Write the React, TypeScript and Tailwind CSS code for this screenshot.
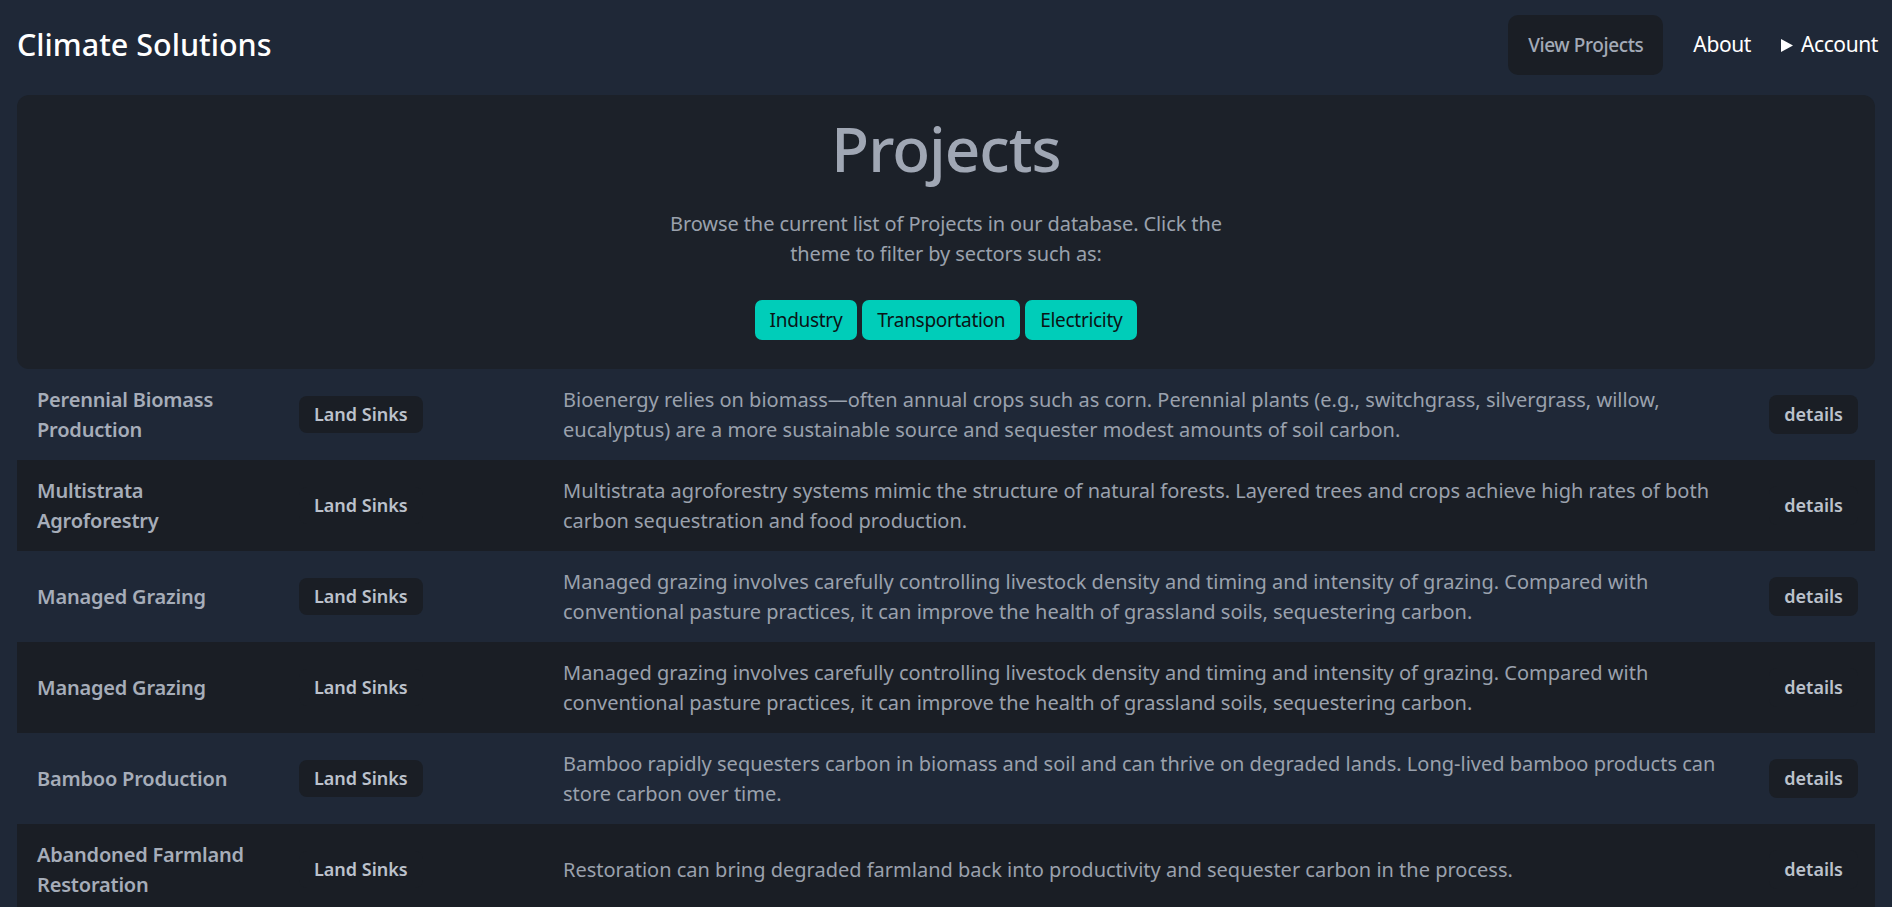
import React from "react";

type Project = {
	title: string;
	theme: string;
	description: string;
};

const projects: Project[] = [
	{
		title: "Perennial Biomass Production",
		theme: "Land Sinks",
		description:
			"Bioenergy relies on biomass—often annual crops such as corn. Perennial plants (e.g., switchgrass, silvergrass, willow, eucalyptus) are a more sustainable source and sequester modest amounts of soil carbon.",
	},
	{
		title: "Multistrata Agroforestry",
		theme: "Land Sinks",
		description:
			"Multistrata agroforestry systems mimic the structure of natural forests. Layered trees and crops achieve high rates of both carbon sequestration and food production.",
	},
	{
		title: "Managed Grazing",
		theme: "Land Sinks",
		description:
			"Managed grazing involves carefully controlling livestock density and timing and intensity of grazing. Compared with conventional pasture practices, it can improve the health of grassland soils, sequestering carbon.",
	},
	{
		title: "Managed Grazing",
		theme: "Land Sinks",
		description:
			"Managed grazing involves carefully controlling livestock density and timing and intensity of grazing. Compared with conventional pasture practices, it can improve the health of grassland soils, sequestering carbon.",
	},
	{
		title: "Bamboo Production",
		theme: "Land Sinks",
		description:
			"Bamboo rapidly sequesters carbon in biomass and soil and can thrive on degraded lands. Long-lived bamboo products can store carbon over time.",
	},
	{
		title: "Abandoned Farmland Restoration",
		theme: "Land Sinks",
		description:
			"Restoration can bring degraded farmland back into productivity and sequester carbon in the process.",
	},
];

const sectors = ["Industry", "Transportation", "Electricity"];

const font = "font-['Noto_Sans','Open_Sans',sans-serif]";

function Header() {
	return (
		<header className="flex h-[90px] items-center justify-between">
			<h1 className="text-[30.5px] font-medium text-white">Climate Solutions</h1>
			<nav className="mr-[-3px] flex items-center gap-[30px]">
				<button className="h-[60px] rounded-[10px] bg-[#1a1e25] px-[20px] text-[19px] font-medium tracking-[-0.4px] text-[#a3aab7]">
					View Projects
				</button>
				<a className="text-[21px] tracking-[-0.4px] text-white">About</a>
				<div className="flex items-center gap-[8px] text-[21px] tracking-[-0.4px] text-white">
					<svg width="12" height="13" viewBox="0 0 12 13">
						<polygon points="0,0 12,6.5 0,13" fill="#ffffff" />
					</svg>
					<span>Account</span>
				</div>
			</nav>
		</header>
	);
}

function Hero() {
	return (
		<section className="mt-[5px] flex flex-col items-center rounded-[12px] bg-[#1c2129] pb-[29px] pt-[22px]">
			<h2 className="text-[62px] font-medium leading-none tracking-[-1px] text-[#a0a7b4]">
				Projects
			</h2>
			<p className="mt-[30px] max-w-[580px] text-center text-[20px] leading-[30px] tracking-[-0.1px] text-[#9aa1ad]">
				Browse the current list of Projects in our database. Click the theme
				to filter by sectors such as:
			</p>
			<div className="mt-[31px] flex gap-[5px]">
				{sectors.map((s) => (
					<button
						key={s}
						className="h-[40px] rounded-[7px] bg-[#00cdb9] px-[15px] text-[19px] tracking-[-0.3px] text-[#0b1416]"
					>
						{s}
					</button>
				))}
			</div>
		</section>
	);
}

function ProjectRow({ project, dark }: { project: Project; dark: boolean }) {
	return (
		<div
			className={`grid grid-cols-[262px_264px_1fr_115px] items-center py-[15.5px] ${
				dark ? "bg-[#1a1e25]" : ""
			}`}
		>
			<div className="pl-[20px] pr-[20px] text-[20px] font-semibold leading-[30px] tracking-[-0.2px] text-[#a6adb9]">
				{project.title}
			</div>
			<div className="pl-[20px]">
				<span className="inline-block rounded-[8px] bg-[#1a1e25] px-[15px] py-[6px] text-[18px] font-semibold leading-[25px] text-[#bcc2cc]">
					{project.theme}
				</span>
			</div>
			<div className="pl-[20px] pr-[20px] text-[20px] leading-[30px] text-[#9aa1ad]">
				{project.description}
			</div>
			<div className="flex justify-end pr-[17px]">
				<button className="rounded-[8px] bg-[#1a1e25] px-[15px] py-[7px] text-[18px] font-semibold leading-[25px] text-[#bcc2cc]">
					details
				</button>
			</div>
		</div>
	);
}

export default function App() {
	return (
		<div className={`min-h-screen bg-[#1f2837] px-[17px] ${font}`}>
			<Header />
			<Hero />
			<div>
				{projects.map((p, i) => (
					<ProjectRow key={i} project={p} dark={i % 2 === 1} />
				))}
			</div>
		</div>
	);
}
